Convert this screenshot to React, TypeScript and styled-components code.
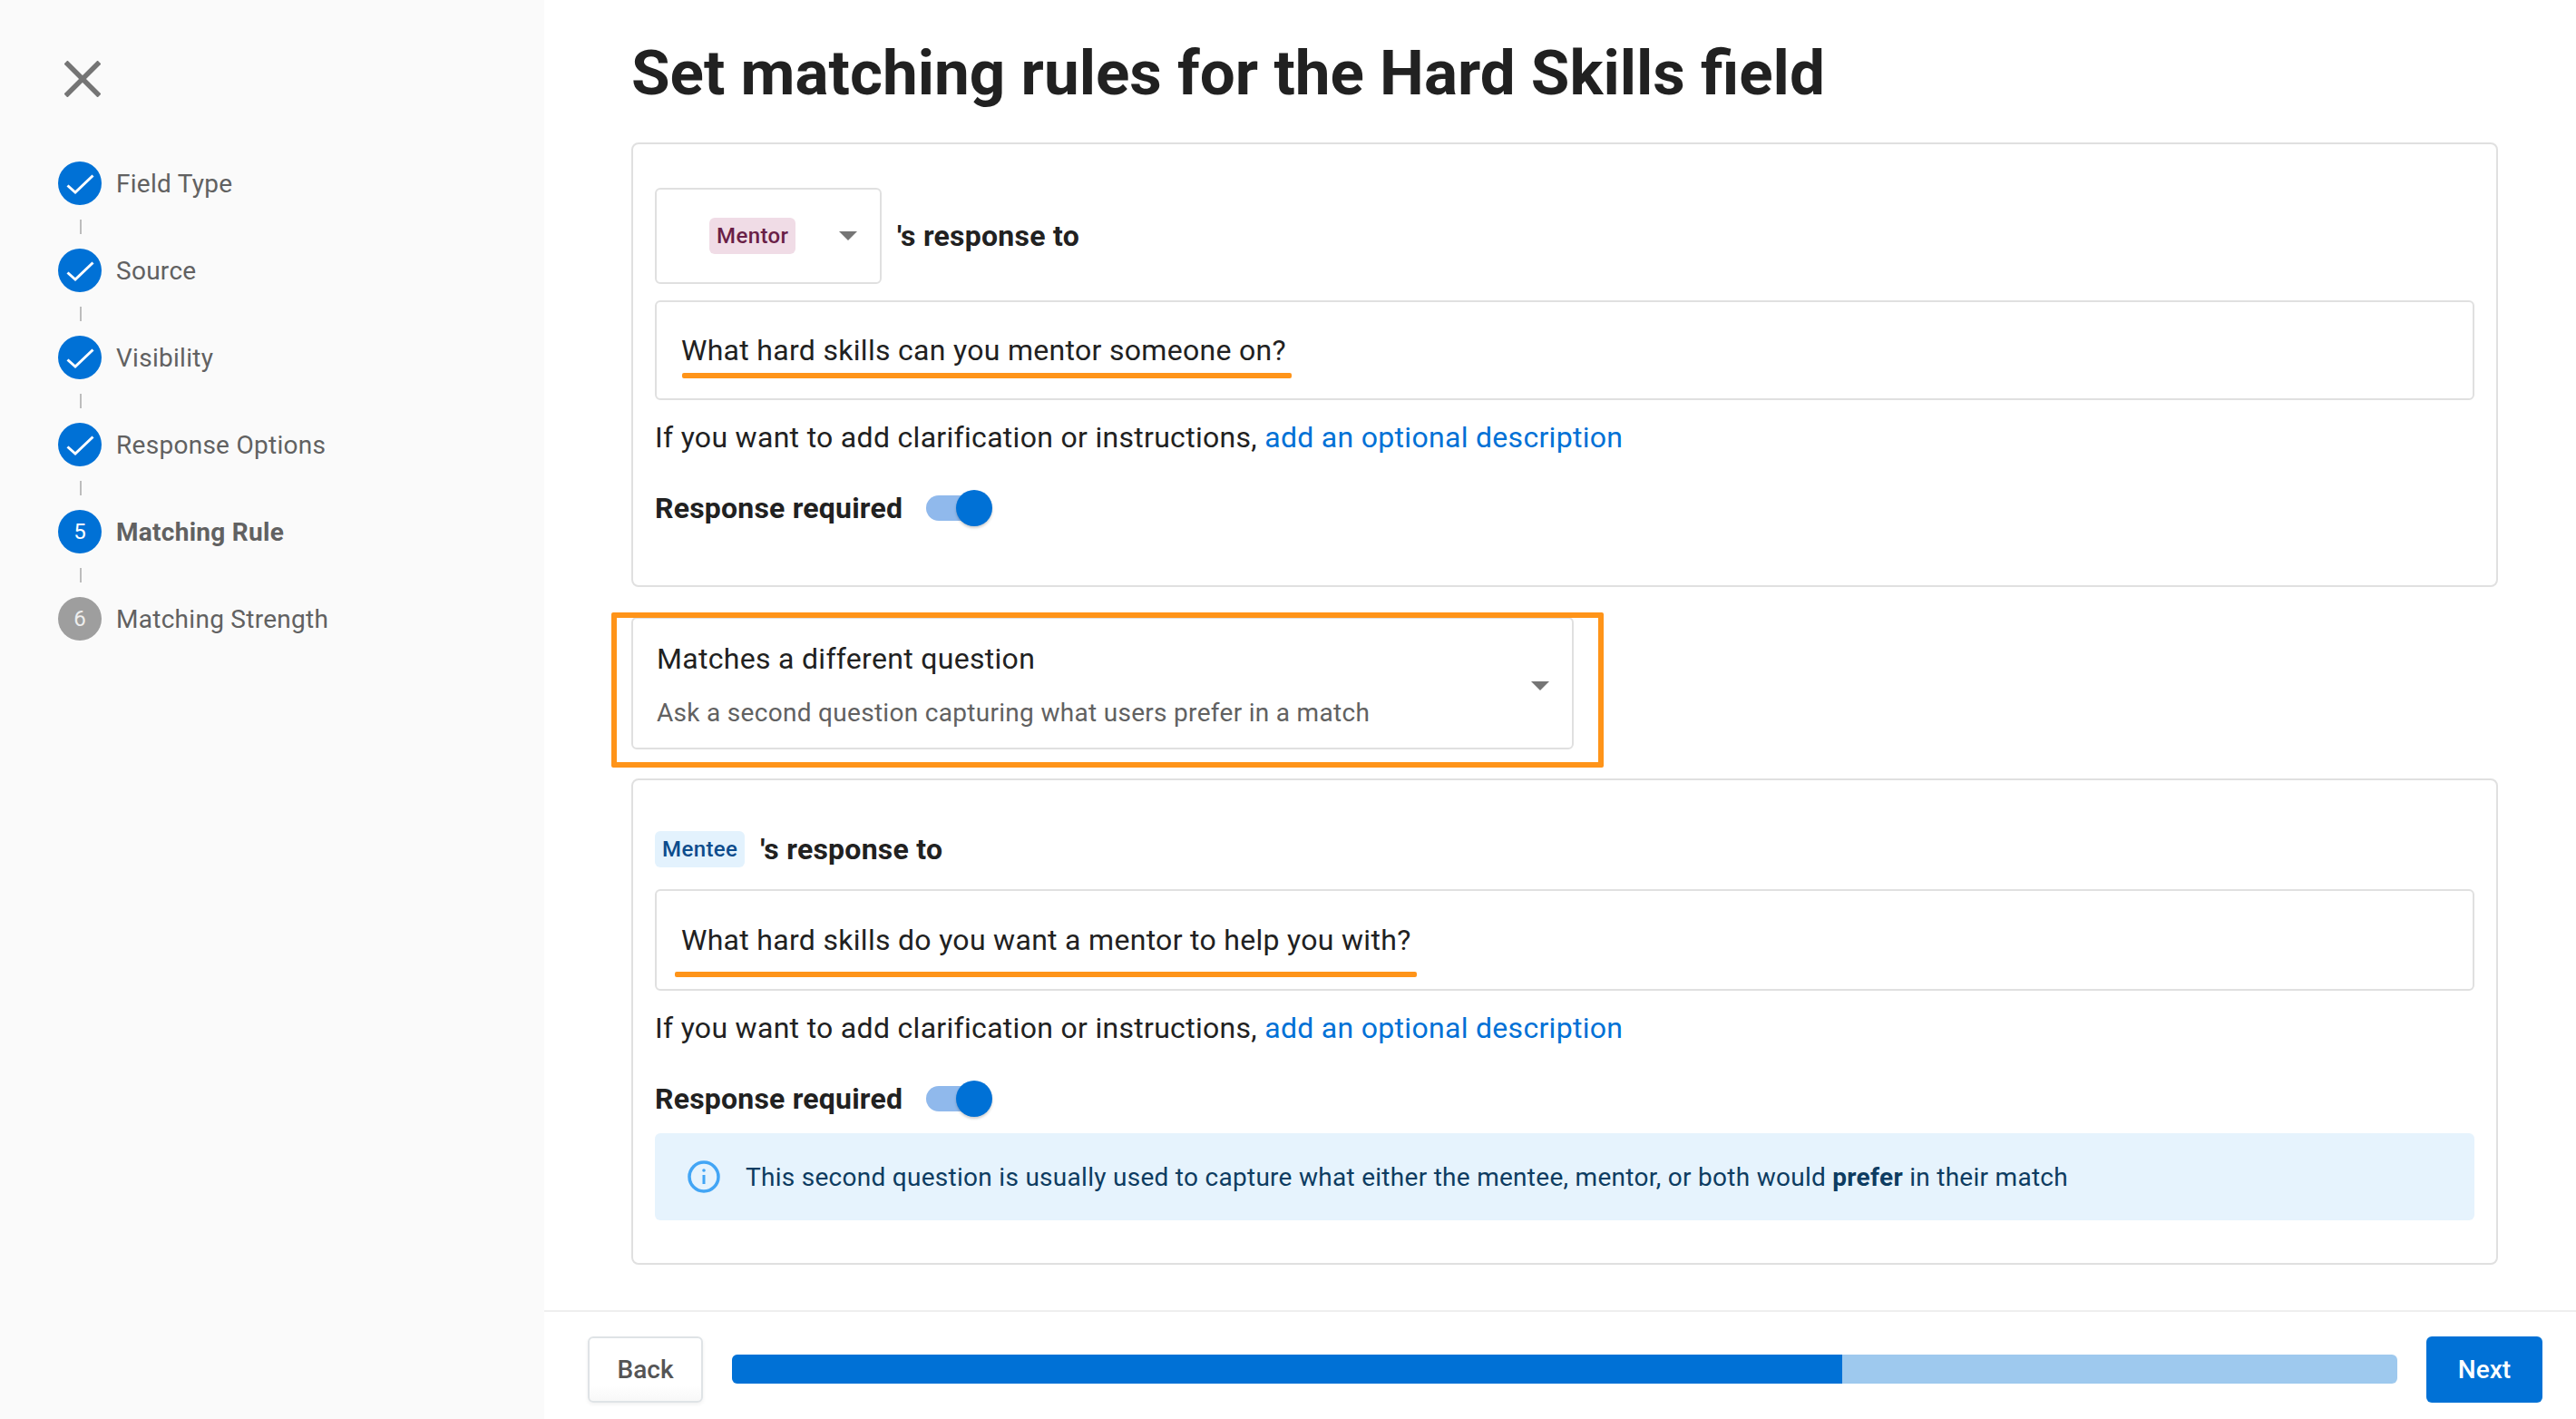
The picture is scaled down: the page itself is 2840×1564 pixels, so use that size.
import styled, { createGlobalStyle } from "styled-components";

const GlobalStyle = createGlobalStyle`
  html, body {
    margin: 0;
    padding: 0;
    background: #fff;
  }
  * {
    box-sizing: border-box;
  }
  body {
    font-family: Roboto, "Liberation Sans", sans-serif;
    color: #212121;
  }
`;

const Page = styled.div`
  display: flex;
  width: 2840px;
  height: 1564px;
  overflow: hidden;
`;

const Sidebar = styled.aside`
  flex: 0 0 600px;
  background: #fafafa;
  padding: 67px 0 0 64px;
`;

const CloseButton = styled.div`
  display: flex;
  width: 40px;
  height: 40px;
  margin-left: 7px;
  margin-bottom: 71px;
`;

const StepRow = styled.div`
  display: flex;
  align-items: center;
  gap: 16px;
  height: 48px;
`;

const StepCircle = styled.div<{ $pending?: boolean }>`
  display: flex;
  align-items: center;
  justify-content: center;
  width: 48px;
  height: 48px;
  border-radius: 50%;
  background: ${(props) => (props.$pending ? "#9e9e9e" : "#0071d6")};
  color: ${(props) => (props.$pending ? "#eeeeee" : "#fff")};
  font-size: 24px;
`;

const StepLabel = styled.span<{ $active?: boolean }>`
  font-size: 28px;
  letter-spacing: 0.28px;
  color: #616161;
  font-weight: ${(props) => (props.$active ? 700 : 400)};
`;

const Connector = styled.div`
  width: 2px;
  height: 16px;
  margin: 16px 0 16px 24px;
  background: #bdbdbd;
`;

const Main = styled.main`
  flex: 1;
  display: flex;
  flex-direction: column;
  min-width: 0;
`;

const Content = styled.div`
  flex: 1;
  padding: 37px 86px 0 96px;
`;

const Title = styled.h1`
  margin: 0 0 32px;
  font-size: 69.2px;
  line-height: 88px;
  font-weight: 700;
  color: #212121;
`;

const Card = styled.section<{ $top: number; $bottom: number }>`
  border: 2px solid #e0e0e0;
  border-radius: 8px;
  padding: ${(props) => props.$top}px 24px ${(props) => props.$bottom}px;
  background: #fff;
`;

const ResponseRow = styled.div`
  display: flex;
  align-items: center;
  gap: 17px;
`;

const RolePicker = styled.div`
  display: flex;
  align-items: center;
  justify-content: space-between;
  width: 250px;
  height: 106px;
  padding: 0 25px 0 58px;
  border: 2px solid #e0e0e0;
  border-radius: 6px;
`;

const RoleTag = styled.span<{ $kind: "mentor" | "mentee" }>`
  display: inline-flex;
  align-items: center;
  justify-content: center;
  height: 40px;
  padding: 0 8px;
  border-radius: 6px;
  font-size: 24px;
  font-weight: 500;
  letter-spacing: 0.4px;
  background: ${(props) => (props.$kind === "mentor" ? "#f0dce6" : "#e3f2fd")};
  color: ${(props) => (props.$kind === "mentor" ? "#6a1f47" : "#0d4c8c")};
`;

const Arrow = styled.span`
  width: 0;
  height: 0;
  border-left: 10px solid transparent;
  border-right: 10px solid transparent;
  border-top: 10px solid #757575;
`;

const ResponseLabel = styled.span`
  font-size: 32px;
  font-weight: 700;
  letter-spacing: 0.25px;
  color: #212121;
`;

const QuestionInput = styled.div<{ $height: number; $gap: number }>`
  position: relative;
  display: flex;
  align-items: center;
  height: ${(props) => props.$height}px;
  margin-top: ${(props) => props.$gap}px;
  padding: 0 27px;
  border: 2px solid #e0e0e0;
  border-radius: 6px;
  font-size: 32px;
  letter-spacing: 0.3px;
  color: #212121;
`;

const Underline = styled.span<{ $left: number; $width: number; $bottom: number }>`
  position: absolute;
  left: ${(props) => props.$left}px;
  bottom: ${(props) => props.$bottom}px;
  width: ${(props) => props.$width}px;
  height: 6px;
  border-radius: 2px;
  background: #ff9419;
`;

const HelperText = styled.p`
  margin: 21px 0 0;
  font-size: 32px;
  line-height: 40px;
  letter-spacing: 0.3px;
  color: #212121;
`;

const HelperLink = styled.a`
  color: #0071d6;
  text-decoration: none;
`;

const RequiredRow = styled.div`
  display: flex;
  align-items: center;
  gap: 26px;
  height: 40px;
  margin-top: 38px;
`;

const RequiredLabel = styled.span`
  font-size: 32px;
  font-weight: 700;
  letter-spacing: 0.2px;
`;

const ToggleTrack = styled.div`
  position: relative;
  width: 63px;
  height: 28px;
  border-radius: 14px;
  background: #90b9ec;
`;

const ToggleThumb = styled.div`
  position: absolute;
  top: -6px;
  right: -10px;
  width: 40px;
  height: 40px;
  border-radius: 50%;
  background: #0071d6;
  box-shadow: 0 2px 3px rgba(0, 0, 0, 0.2);
`;

const RuleSelect = styled.div`
  position: relative;
  display: flex;
  align-items: center;
  justify-content: space-between;
  width: 1039px;
  height: 146px;
  margin: 33px 0 32px;
  padding: 5px 25px 0 26px;
  border: 2px solid #e0e0e0;
  border-radius: 6px;
`;

const Highlight = styled.div`
  position: absolute;
  top: -7px;
  left: -24px;
  right: -35px;
  bottom: -22px;
  border: 6px solid #ff9419;
  border-radius: 2px;
`;

const RuleText = styled.div`
  display: flex;
  flex-direction: column;
  gap: 16px;
`;

const RuleTitle = styled.span`
  font-size: 32px;
  line-height: 44px;
  letter-spacing: 0.3px;
  color: #212121;
`;

const RuleHint = styled.span`
  font-size: 28px;
  line-height: 44px;
  letter-spacing: 0.3px;
  color: #616161;
`;

const InfoBanner = styled.div`
  display: flex;
  align-items: center;
  gap: 28px;
  height: 96px;
  margin-top: 18px;
  padding: 0 36px;
  border-radius: 6px;
  background: #e6f3fd;
  font-size: 28px;
  letter-spacing: 0.28px;
  color: #0d3c61;
`;

const Footer = styled.footer`
  flex: 0 0 120px;
  display: flex;
  align-items: center;
  gap: 32px;
  padding: 8px 37px 0 48px;
  border-top: 2px solid #eeeeee;
`;

const BackButton = styled.button`
  flex: 0 0 127px;
  height: 73px;
  border: 2px solid #dfe3e6;
  border-radius: 6px;
  background: linear-gradient(#fff 75%, #f8f8f8);
  box-shadow: 0 2px 4px rgba(0, 0, 0, 0.06);
  font: 500 28px Roboto, sans-serif;
  color: #555;
`;

const NextButton = styled.button`
  flex: 0 0 128px;
  height: 73px;
  border: 0;
  border-radius: 6px;
  background: #0071d6;
  font: 500 28px Roboto, sans-serif;
  color: #fff;
`;

const ProgressTrack = styled.div`
  flex: 1;
  height: 32px;
  border-radius: 6px;
  overflow: hidden;
  background: #9ec9ee;
`;

const ProgressFill = styled.div<{ $value: number }>`
  width: ${(props) => props.$value}%;
  height: 100%;
  background: #0071d6;
`;

const steps = [
  { label: "Field Type", done: true },
  { label: "Source", done: true },
  { label: "Visibility", done: true },
  { label: "Response Options", done: true },
  { label: "Matching Rule", active: true, num: 5 },
  { label: "Matching Strength", pending: true, num: 6 },
];

function CheckIcon() {
  return (
    <svg width="48" height="48" viewBox="0 0 48 48" fill="none">
      <path d="M10.5 26.5 L19 34 L38.5 15.5" stroke="#fff" strokeWidth="3" />
    </svg>
  );
}

function CloseIcon() {
  return (
    <svg width="40" height="40" viewBox="0 0 40 40" fill="none">
      <path d="M1.5 1.5 L38.5 38.5 M38.5 1.5 L1.5 38.5" stroke="#757575" strokeWidth="5.5" />
    </svg>
  );
}

function InfoIcon() {
  return (
    <svg width="36" height="36" viewBox="0 0 36 36" fill="none">
      <circle cx="18" cy="18" r="16" stroke="#42a5f5" strokeWidth="3.5" />
      <path d="M18 16 V26" stroke="#42a5f5" strokeWidth="3" />
      <circle cx="18" cy="11" r="1.8" fill="#42a5f5" />
    </svg>
  );
}

function RequiredToggle() {
  return (
    <RequiredRow>
      <RequiredLabel>Response required</RequiredLabel>
      <ToggleTrack>
        <ToggleThumb />
      </ToggleTrack>
    </RequiredRow>
  );
}

function Helper() {
  return (
    <HelperText>
      If you want to add clarification or instructions,{" "}
      <HelperLink>add an optional description</HelperLink>
    </HelperText>
  );
}

function App() {
  return (
    <>
      <GlobalStyle />
      <Page>
        <Sidebar>
          <CloseButton>
            <CloseIcon />
          </CloseButton>
          {steps.map((step, index) => (
            <div key={step.label}>
              <StepRow>
                <StepCircle $pending={step.pending}>
                  {step.done ? <CheckIcon /> : step.num}
                </StepCircle>
                <StepLabel $active={step.active}>{step.label}</StepLabel>
              </StepRow>
              {index < steps.length - 1 && <Connector />}
            </div>
          ))}
        </Sidebar>
        <Main>
          <Content>
            <Title>Set matching rules for the Hard Skills field</Title>
            <Card $top={48} $bottom={65}>
              <ResponseRow>
                <RolePicker>
                  <RoleTag $kind="mentor">Mentor</RoleTag>
                  <Arrow />
                </RolePicker>
                <ResponseLabel>'s response to</ResponseLabel>
              </ResponseRow>
              <QuestionInput $height={110} $gap={18}>
                What hard skills can you mentor someone on?
                <Underline $left={28} $width={672} $bottom={22} />
              </QuestionInput>
              <Helper />
              <RequiredToggle />
            </Card>
            <RuleSelect>
              <RuleText>
                <RuleTitle>Matches a different question</RuleTitle>
                <RuleHint>Ask a second question capturing what users prefer in a match</RuleHint>
              </RuleText>
              <Arrow />
              <Highlight />
            </RuleSelect>
            <Card $top={56} $bottom={47}>
              <ResponseRow>
                <RoleTag $kind="mentee">Mentee</RoleTag>
                <ResponseLabel>'s response to</ResponseLabel>
              </ResponseRow>
              <QuestionInput $height={112} $gap={24}>
                What hard skills do you want a mentor to help you with?
                <Underline $left={20} $width={818} $bottom={13} />
              </QuestionInput>
              <Helper />
              <RequiredToggle />
              <InfoBanner>
                <InfoIcon />
                <span>
                  This second question is usually used to capture what either the mentee, mentor, or
                  both would <strong>prefer</strong> in their match
                </span>
              </InfoBanner>
            </Card>
          </Content>
          <Footer>
            <BackButton>Back</BackButton>
            <ProgressTrack>
              <ProgressFill $value={66.67} />
            </ProgressTrack>
            <NextButton>Next</NextButton>
          </Footer>
        </Main>
      </Page>
    </>
  );
}

export default App;
